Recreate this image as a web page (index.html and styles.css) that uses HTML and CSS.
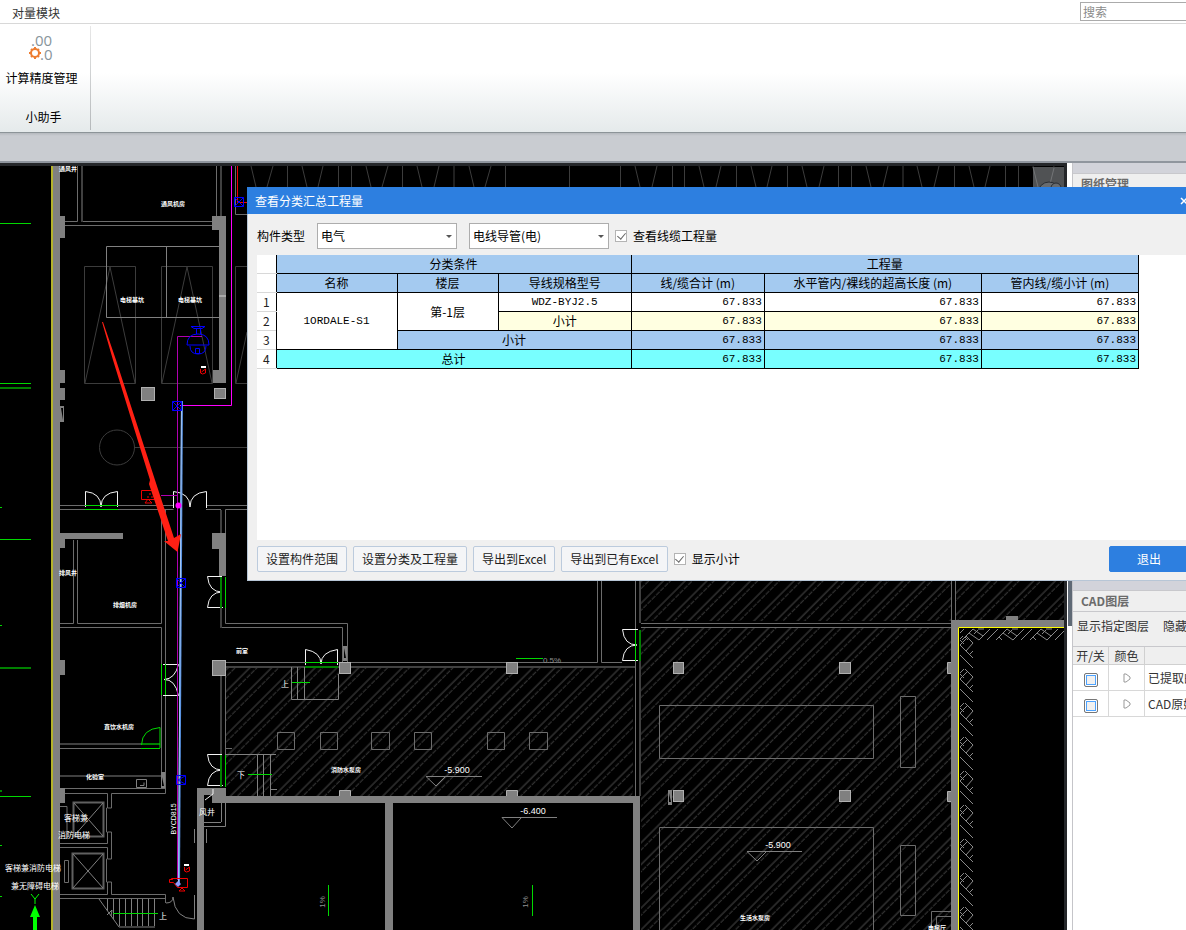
FILE: index.html
```
<!DOCTYPE html>
<html lang="zh-CN">
<head>
<meta charset="utf-8">
<title>查看分类汇总工程量</title>
<link rel="stylesheet" href="styles.css">
</head>
<body>
<div class="app">
  <header class="menu-bar">
    <a class="menu-tab" href="#">对量模块</a>
    <input class="search" type="text" placeholder="搜索" aria-label="搜索">
  </header>
  <div class="ribbon">
    <section class="ribbon-group">
      <button class="ribbon-button" type="button">
        <svg class="precision-icon" width="28" height="30" viewBox="0 0 28 30" aria-hidden="true">
          <text class="icon-digits" x="4" y="13">.00</text>
          <text class="icon-digits" x="13" y="27">.0</text>
          <g class="gear">
            <circle cx="8" cy="20" r="4"/>
            <path d="M8 14v2M8 24v2M2 20h2M12 20h2M4 16l1 1M11 23l1 1M4 24l1-1M11 17l1-1"/>
          </g>
        </svg>
        <span>计算精度管理</span>
      </button>
      <span class="ribbon-caption">小助手</span>
    </section>
  </div>
  <div class="tool-strip"></div>

  <main class="workspace">
    <div class="canvas">
      <svg class="drawing" width="100%" role="img" aria-label="CAD 图纸">
        <defs>
          <pattern id="hatch" width="15.4" height="120" patternUnits="userSpaceOnUse" patternTransform="rotate(45)">
            <path d="M2 0V120" stroke="#4a4a4a"/>
            <path d="M7 0V120" stroke="#3c3c3c" stroke-dasharray="5 1"/>
          </pattern>
          <pattern id="soil" x="960" y="655" width="14" height="34" patternUnits="userSpaceOnUse">
            <path class="soil-line" d="M0 0L13 13M5 14L13 22M0 24L13 37M0 -10L13 3M0 24L8 16M6 30L13 22M0 18L4 14M10 33L13 30M0 19L4 23"/>
          </pattern>
          <pattern id="soil-top" x="987" y="628" width="34" height="13" patternUnits="userSpaceOnUse">
            <path class="soil-line" d="M0 12L11 1M9 12L20 1M26 12L37 1M-8 12L3 1M12 9L15 12M16 5L26 12M20 1L30 8M25 1L31 1M21 6L25 2"/>
          </pattern>
        </defs>
        <g transform="translate(0,-163)">
          <!-- hatched rooms -->
          <g fill="url(#hatch)">
            <rect x="226" y="668" width="407" height="128"/>
            <rect x="641" y="575" width="310" height="46"/>
            <rect x="641" y="628" width="310" height="310"/>
            <rect x="956" y="575" width="108" height="45"/>
          </g>
          <rect x="960" y="636" width="14" height="300" fill="url(#soil)"/>
          <rect x="960" y="628" width="104" height="13" fill="url(#soil-top)"/>

          <!-- roof slopes along the top edge -->
          <path class="dark" d="M251 166l5 21M273 166l-6 21M302 166l5 21M323 166l-5 21M366 166l5 21M388 166l-6 21M417 166l5 21M439 166l-5 21M469 166l5 21M491 166l-6 21M635 166l5 21M657 166l-5 21M699 166l5 21M721 166l-5 21M751 166l5 21M772 166l-5 21M802 166l5 21M824 166l-5 21M866 166l5 21M888 166l-5 21M917 166l5 21M939 166l-5 21M969 166l5 21M990 166l-5 21M1033 166l5 21M1054 166l-5 21"/>
          <path class="dark" d="M287.500 166v21M338.500 166v21M351.500 166v21M402.500 166v21M505.500 166v21M569.500 166v21M620.500 166v21M672.500 166v21M684.500 166v21M736.500 166v21M787.500 166v21M838.500 166v21M851.500 166v21M954.500 166v21M1005.500 166v21M1018.500 166v21"/>
          <path class="shade" d="M454 166v21M903 166v21"/>

          <!-- axis marks and boundary -->
          <path class="green" d="M0 223.500H31M0 383.500H31M0 507.500H2M0 539.500H31M0 625.500H2M0 796.500H31M0 845.500H2M0 896.500H2"/>
          <path class="green-wide" d="M0 388H31M0 668H31M0 791H2"/>
          <rect x="51" y="166" width="2" height="770" fill="#b5b32c"/>

          <!-- elevator pits -->
          <path class="dark" d="M84.500 266.500h51v117h-51zM110 267L85 383M110 267L135 383M161.500 266.500h51v117h-51zM187 267L162 383M187 267L212 383M247 266.500H235.500V383.500H247M247 332L236 383"/>
          <path class="gray" d="M219 246.500H106.500V317.500H219M166.500 246.500V317.500"/>
          <circle class="dark" cx="117" cy="447.500" r="17.500"/>
          <path class="dark" d="M134 447.500H247"/>

          <!-- upper rooms -->
          <path class="line" d="M77.500 166V221.500H60M216.500 166V216M60 505.500H85M118 505.500H173M207 505.500H247M60 509.500H173.500M206 509.500H221M247 509.500H225.500V533M82 221.500H212M65 225.500H212M235.500 166V214.500H247"/>
          <path class="dim" d="M82 166V222M221 166V217M221 510V533"/>
          <path class="line" d="M73.500 540V623.500H60M77.500 540V623.500H161.500V510M60 627.500H161.500V773M165.500 510V793.500H111.500V808M60 748.500H141M60 788.500H165"/>
          <path class="dim" d="M60 744H141M60 776H161"/>
          <path class="line" d="M225.500 608V623.500H347.500V662M222 627.500H342.500V662M226 662.500H305M338 662.500H597.500V575M601.500 575V662.500H622M635.500 575V796M225.500 675V755M225 748.500H232"/>
          <path class="dim" d="M221 608V628M221 675V755M226 667H305M338 667H635M640 575V623M640 661V796"/>
          <path class="line" d="M641 623.500H951.500V575M641 627.500H951M955.500 575V620"/>

          <!-- walls -->
          <g class="wall">
            <rect x="53" y="166" width="7" height="770"/>
            <rect x="60" y="216" width="5" height="22"/>
            <rect x="60" y="370" width="5" height="13"/>
            <rect x="60" y="388" width="5" height="12"/>
            <path d="M60 406h4v16h-4z"/>
            <rect x="60" y="533" width="63" height="6"/>
            <rect x="60" y="539" width="5" height="9"/>
            <rect x="60" y="660" width="5" height="15"/>
            <rect x="60" y="788" width="5" height="15"/>
            <rect x="212" y="216" width="14" height="14"/>
            <rect x="219" y="217" width="7" height="166"/>
            <rect x="213" y="370" width="13" height="13"/>
            <rect x="219" y="533" width="7" height="43"/>
            <rect x="212" y="533" width="14" height="16"/>
            <rect x="343" y="646" width="4" height="15"/>
            <rect x="161" y="772" width="4" height="16"/>
            <rect x="212" y="788" width="14" height="15"/>
            <rect x="225" y="796" width="415" height="7"/>
            <rect x="385" y="803" width="8" height="133"/>
            <rect x="633" y="803" width="7" height="133"/>
            <rect x="197" y="788" width="7" height="148"/>
            <rect x="197" y="788" width="15" height="7"/>
            <rect x="951" y="620" width="113" height="7"/>
            <rect x="951" y="620" width="7" height="316"/>
            <rect x="1006" y="616" width="12" height="4"/>
            <rect x="668" y="790" width="4" height="15"/>
          </g>
          <path d="M61 408l2 12v-12zM344 658v-10l2 10zM162 786v-9l2 9zM669 802v-9l2 9z" fill="#000"/>
          <path d="M219 296h7" stroke="#aaa" stroke-width="2"/>

          <!-- columns -->
          <g class="column">
            <rect x="141.500" y="387.500" width="13" height="13"/>
            <rect x="214.500" y="388.500" width="11" height="10"/>
            <rect x="212.500" y="660.500" width="13" height="15"/>
            <rect x="339.500" y="662.500" width="11" height="11"/>
            <rect x="506.500" y="662.500" width="11" height="11"/>
            <rect x="673.500" y="662.500" width="10" height="11"/>
            <rect x="839.500" y="662.500" width="11" height="11"/>
            <path d="M951 662.500h-3.500v11h3.500M951 791.500h-3.500v10h3.500M339.500 796v-5.500h11v5.500M506.500 796v-5.500h11v5.500"/>
            <rect x="673.500" y="790.500" width="10" height="11"/>
            <rect x="839.500" y="790.500" width="11" height="11"/>
          </g>
          <path class="yellow" d="M958.500 936V627.500H1064"/>

          <!-- stairs and equipment bases -->
          <path class="gray" d="M291.500 667V699.500H338.500V674M297.500 667V699M304.500 667V699M225 754.500H276M257.500 754V796M263.500 754V796M270.500 754V796M271 789.500H277"/>
          <path class="line" d="M277.500 732.500h17v17h-17zM320.500 732.500h17v17h-17zM371.500 732.500h18v17h-18zM414.500 732.500h17v17h-17zM487.500 732.500h17v17h-17zM529.500 732.500h18v17h-18z"/>
          <path class="line" d="M659.500 705.500h214v53h-214zM900.500 696.500h15v71h-15zM659.500 936V827.500h214V936M900.500 845.500h15v70h-15zM951 911.500H931.500V936M951 916.500H936.500V936"/>
          <path class="gray" d="M482 776.500H426L436 786L445 777M557 817.500H502L512 828L521 818M802 851.500H747L757 861L766 852"/>

          <!-- elevators -->
          <path class="line" d="M65 793.500H107.500V808L106.500 808V832H107.500V843.500H60M60 847.500H107.500V859H106.500V882H107.500V894.500H60M111.500 808H108M111.500 832H108M111.500 832V859H108M111.500 882H108M111.500 882V894.500H165.500V903M60 898.500H165M64.500 860.500h4v22h-4zM60 806.500h7v32h-7"/>
          <path d="M73.500 802.500h30v34h-30zM72.500 853.500h31v35h-31z" stroke="#606060" stroke-width="2" fill="none"/>
          <path class="gray" d="M74 803L103 836M103 803L74 836M73 854L103 888M103 854L73 888"/>
          <path class="gray" d="M136.500 787.500v-8h10v8zM140 785.500h4v-3"/>
          <path class="gray" d="M204 822.500H221M204 826.500H225.500V803M221.500 803V822M194.500 829V843M206.500 829V843"/>
          <path class="gray" d="M99 899L119 927H155M107.500 899V911M113.500 899V919M119.500 899V926M125.500 899V926M131.500 899V926M137.500 899V926M142.500 899V926M148.500 899V926M154.500 899V926M107 915l5-5l-1 6"/>
          <path class="gray" d="M166 903Q173 903 173 897Q175 919 194.500 919V895"/>

          <!-- doors -->
          <path class="door" d="M85.500 507V491.500Q101 493 101 507Q101 493 117.500 491.500V507M173.500 508V491.500Q190 493 190 507Q190 493 206.500 491.500V508M305.500 665V649.500Q321 652 321 664Q321 652 337.500 649.500V665"/>
          <path class="door" d="M222 576.500H207.500Q209 592 222 592Q209 592 207.500 607.500H223M222 754.500H207.500Q209 770 222 770Q209 770 207.500 785.500H223M638 629.500H622.500Q624 645 637 645Q624 645 622.500 660.500H638M163 664.500H178.500Q175 679 164 679.500Q175 679 178.500 695.500H163M205 800l8-6v-5"/>
          <path class="green" d="M85 505.500H118M85 509.500H118M161.500 664V695M165.500 664V695M305 662.500H338M225.500 577V608M225.500 755V787M635.500 630V661M292 682.500H310M248 774.500H272M516 658.500H543M328.500 885V916M532.500 885V916M113 913.500H158M141 748.500H160"/>
          <path class="green-wide" d="M305 667H338M221 577V608M221 755V787M640 630V661M141 744H160"/>
          <path class="green" d="M141.500 745Q142 729 160 727.500V748"/>

          <!-- circuit wiring -->
          <path class="magenta" d="M231.500 166V405.500H180"/>
          <path class="purple" d="M202 336.500H177.500V880M161 495.500H178"/>
          <path class="red" d="M237.500 166V202.500H247"/>
          <path d="M182 401L179 884" stroke="#5791e0" stroke-width="2"/>
          <path d="M181.500 401L178.500 884" stroke="#a5c6f5" stroke-width="1"/>
          <circle cx="178.500" cy="505.500" r="3" fill="#f0f"/>
          <path class="blue" d="M234.500 197.500h9v9h-9zl9 9M243.500 197.500l-9 9M172.500 401.500h9v9h-9zl9 9M181.500 401.500l-9 9M176.500 578.500h9v9h-9zl9 9M185.500 578.500l-9 9M176.500 775.500h9v9h-9zM185 776l-7 4l7 4"/>
          <path class="blue" d="M191 326.500h14l-3 2h-8zM196.500 329v5M200.500 329v5M187 345Q187 334 198 334Q209 334 209 345zM190 346Q190 354 198 354Q206 354 206 346M195.500 348.500h4v5h-4z"/>
          <path class="red" d="M141.500 490.500h13v9h-13zM145 503l3-4l4 4zM147 497h2M151 497h2M149 494h2M171.500 878.500h16v9h-10l-4-5h-4v-3h3zM179 891l3-3l3 3z"/>
          <path class="red" d="M200.500 369v4l2 1l3-1v-4l-4 3M184.500 867v4l2 1l3-1v-4l-4 3"/>
          <path d="M201 367h5M184 865h5" stroke="#fff" stroke-width="2"/>
          <path d="M178 881l3 3l-3 3l-3-3z" fill="#8e9cff"/>
          <path d="M102 322L103 322L116 360L155 480L174 538L181 534L177.500 552L164 541L168 541L149 484L150 480L113 360Z" fill="#ff2014"/>
          <path d="M31 894l4 5l4-5M35 899v5" fill="none" stroke="#0f0"/>
          <path d="M35 905l5 12h-3v19h-4v-19h-3z" fill="#0f0"/>

          <!-- labels -->
          <g class="tiny">
            <text x="173" y="206">通风机房</text>
            <text x="132" y="302">电梯基坑</text>
            <text x="190" y="302">电梯基坑</text>
            <text x="68" y="171">通风井</text>
            <text x="68" y="575">排风井</text>
            <text x="125" y="607">排烟机房</text>
            <text x="119" y="729">直饮水机房</text>
            <text x="95" y="779">化验室</text>
            <text x="242" y="653">前室</text>
            <text x="346" y="772">消防水泵房</text>
            <text x="755" y="920">生活水泵房</text>
            <text x="937" y="930">电梯厅</text>
          </g>
          <g class="label">
            <text x="76" y="821">客梯兼</text>
            <text x="74" y="838">消防电梯</text>
            <text x="33" y="871">客梯兼消防电梯</text>
            <text x="35" y="889">兼无障碍电梯</text>
            <text x="207" y="815">风井</text>
            <text x="163" y="919">上</text>
            <text x="285" y="687">上</text>
            <text x="241" y="778">下</text>
          </g>
          <g class="level">
            <text x="457" y="773">-5.900</text>
            <text x="533" y="814">-6.400</text>
            <text x="778" y="848">-5.900</text>
          </g>
          <text class="cable" x="176" y="819" transform="rotate(-90 176 819)">BYCD815</text>
          <g class="slope">
            <text x="552" y="663">0.5%</text>
            <text x="325" y="902" transform="rotate(-90 325 902)">1%</text>
            <text x="528" y="902" transform="rotate(-90 528 902)">1%</text>
          </g>

          <!-- view cube -->
          <rect x="1033" y="167" width="32" height="30" rx="1" fill="#505254"/>
          <path d="M1033 167l5 20M1054 168l-5 20" stroke="#737577"/>
          <circle cx="1049" cy="193" r="11" fill="#686c70" stroke="#292c31"/>
          <circle cx="1056" cy="188" r="5" fill="#686c70" stroke="#292c31"/>
        </g>
      </svg>
    </div>
    <div class="gutter"><div class="thumb"></div></div>
    <aside class="side">
      <section class="panel">
        <div class="panel-grip"></div>
        <h2 class="panel-title">图纸管理</h2>
      </section>
      <section class="panel">
        <div class="panel-grip"></div>
        <h2 class="panel-title">CAD图层</h2>
        <div class="panel-tools">
          <button type="button">显示指定图层</button>
          <button type="button">隐藏指定图层</button>
        </div>
        <div class="layers-wrap">
          <table class="layers">
            <colgroup><col class="c-toggle"><col class="c-color"><col class="c-name"></colgroup>
            <thead><tr><th>开/关</th><th>颜色</th><th></th></tr></thead>
            <tbody>
              <tr>
                <td><input type="checkbox" aria-label="已提取的 CAD 图层"></td>
                <td><svg width="8" height="10" viewBox="0 0 8 10"><path class="expander" d="M1 1h2l4 3v2l-4 3H1z"/></svg></td>
                <td class="layer-name">已提取的CAD图层</td>
              </tr>
              <tr>
                <td><input type="checkbox" aria-label="CAD 原始图层"></td>
                <td><svg width="8" height="10" viewBox="0 0 8 10"><path class="expander" d="M1 1h2l4 3v2l-4 3H1z"/></svg></td>
                <td class="layer-name">CAD原始图层</td>
              </tr>
            </tbody>
          </table>
        </div>
      </section>
    </aside>
  </main>

  <div class="dialog" role="dialog" aria-labelledby="dialog-title">
    <div class="dialog-title">
      <span id="dialog-title">查看分类汇总工程量</span>
      <button class="close" type="button" aria-label="关闭">
        <svg width="8" height="8" viewBox="0 0 8 8"><path d="M1 1l6 6M7 1L1 7" stroke="#fff" stroke-width="1.500"/></svg>
      </button>
    </div>
    <div class="filters">
      <label for="kind">构件类型</label>
      <span class="combo"><select id="kind"><option>电气</option></select></span>
      <span class="combo"><select aria-label="构件"><option>电线导管(电)</option></select></span>
      <label class="check"><input type="checkbox" checked>查看线缆工程量</label>
    </div>
    <div class="sheet">
      <table class="totals">
        <colgroup><col class="w-index"><col class="w-name"><col class="w-floor"><col class="w-spec"><col class="w-total"><col class="w-level"><col class="w-pipe"></colgroup>
        <thead>
          <tr><th class="idx"></th><th colspan="3">分类条件</th><th colspan="3">工程量</th></tr>
          <tr><th class="idx"></th><th>名称</th><th>楼层</th><th>导线规格型号</th><th>线/缆合计 (m)</th><th>水平管内/裸线的超高长度 (m)</th><th>管内线/缆小计 (m)</th></tr>
        </thead>
        <tbody>
          <tr><th class="idx">1</th><td class="code" rowspan="3">1ORDALE-S1</td><td rowspan="2">第-1层</td><td class="code">WDZ-BYJ2.5</td><td class="num">67.833</td><td class="num">67.833</td><td class="num">67.833</td></tr>
          <tr class="sub"><th class="idx">2</th><td>小计</td><td class="num">67.833</td><td class="num">67.833</td><td class="num">67.833</td></tr>
          <tr class="floor-sum"><th class="idx">3</th><td colspan="2">小计</td><td class="num">67.833</td><td class="num">67.833</td><td class="num">67.833</td></tr>
          <tr class="grand"><th class="idx">4</th><td colspan="3">总计</td><td class="num">67.833</td><td class="num">67.833</td><td class="num">67.833</td></tr>
        </tbody>
      </table>
    </div>
    <div class="actions">
      <button class="btn" type="button">设置构件范围</button>
      <button class="btn" type="button">设置分类及工程量</button>
      <button class="btn" type="button">导出到Excel</button>
      <button class="btn" type="button">导出到已有Excel</button>
      <label class="check"><input type="checkbox" checked>显示小计</label>
      <button class="btn primary" type="button">退出</button>
    </div>
  </div>
</div>
</body>
</html>
```
FILE: styles.css
```
* { box-sizing: border-box; }

body {
  margin: 0;
  font: 12px/18px "Noto Sans CJK SC", sans-serif;
  color: #000;
}

button, input, select { font: inherit; color: inherit; }

button {
  padding: 0;
  border: 0;
  background: none;
  white-space: nowrap;
}

.app {
  position: relative;
  display: flex;
  flex-direction: column;
  height: 100vh;
  overflow: hidden;
}

/* menu and ribbon */
.menu-bar {
  display: flex;
  justify-content: space-between;
  align-items: center;
  flex: none;
  height: 24px;
  padding-left: 12px;
  border-bottom: 1px solid #d8d8d8;
  overflow: hidden;
}

.menu-tab { color: #333; text-decoration: none; padding-top: 3px; }

.search {
  width: 120px;
  height: 19px;
  margin-right: -14px;
  padding: 0 2px;
  border: 1px solid #ababab;
}

.search::placeholder { color: #8a8a8a; }

.ribbon {
  display: flex;
  flex: none;
  height: 109px;
  padding: 2px 0;
  border-bottom: 1px solid #8c9498;
  background: linear-gradient(#fff 45%, #e5eaeb);
}

.ribbon-group {
  display: flex;
  flex-direction: column;
  justify-content: space-between;
  align-items: center;
  width: 91px;
  padding: 7px 7px 4px 0;
  border-right: 1px solid;
  border-image: linear-gradient(#e8e8e8, #b4b8ba) 1;
}

.ribbon-button {
  display: flex;
  flex-direction: column;
  align-items: center;
  gap: 6px;
}

.precision-icon { overflow: visible; }
.icon-digits { font: 15px "Open Sans", sans-serif; fill: #87959b; }
.gear { fill: none; stroke: #ee7d31; stroke-width: 2; }
.ribbon-caption { padding-left: 4px; }

.tool-strip {
  flex: none;
  height: 30px;
  border-bottom: 2px solid #90969e;
  background: linear-gradient(#b5b9be, #c9ccd1 3px);
}

/* workspace */
.workspace { display: flex; flex: 1; min-height: 0; }

.canvas {
  flex: 1;
  min-width: 0;
  border: solid #25272a;
  border-width: 3px 3px 0 0;
  background: #000;
  overflow: hidden;
}

.drawing { display: block; height: calc(100% + 3px); margin-top: -3px; }

.gutter { flex: none; width: 5px; padding: 417px 0 0 1px; background: #fff; }
.thumb { width: 4px; height: 46px; background: #5f6975; }

/* drawing strokes */
.dark, .dim, .shade, .gray, .line, .green, .green-wide, .door, .magenta, .purple, .red, .blue, .yellow, .soil-line { fill: none; }
.dark { stroke: #3c3c3c; }
.dim { stroke: #404040; stroke-width: 2; }
.shade { stroke: #202020; stroke-width: 2; }
.gray { stroke: #808080; }
.line { stroke: #6c6c6c; }
.green { stroke: #00d800; }
.green-wide { stroke: #008000; stroke-width: 2; }
.door { stroke: #f4f4f4; }
.magenta { stroke: #ff00ff; }
.purple { stroke: #b000b0; }
.red { stroke: #f00000; }
.blue { stroke: #0000ff; }
.yellow { stroke: #ffff00; }
.soil-line { stroke: #8a8a8a; }
.wall { fill: #808080; }
.column { fill: #808080; stroke: #b0b0b0; }

.tiny, .label, .level, .slope, .cable { text-anchor: middle; fill: #fff; }
.tiny { font-size: 6px; font-weight: 700; }
.label { font-size: 8px; }
.level { font: 9px "Liberation Sans", sans-serif; }
.cable { font: 7px "Liberation Sans", sans-serif; }
.slope { font: 8px "Liberation Sans", sans-serif; fill: #909090; }

/* side panels */
.side {
  display: grid;
  grid-template-rows: 417px 1fr;
  flex: none;
  width: 114px;
  border-left: 1px solid #c5c5c9;
  color: #333;
}

.panel { background: #fff; overflow: hidden; }
.panel-grip { height: 10px; background: #d2d3da; }

.panel-title {
  height: 22px;
  margin: 0;
  padding-left: 8px;
  border: solid #c8c8cc;
  border-width: 1px 0;
  background: #efefef;
  color: #6b6b6b;
  font-size: 12px;
  line-height: 19px;
}

.panel-tools {
  display: flex;
  gap: 14px;
  height: 34px;
  padding: 5px 4px 0;
  background: #efefef;
}

.panel-tools button { height: 18px; }

.layers-wrap { border-top: 1px solid #c8c8cc; }
.layers { width: 200px; table-layout: fixed; border-collapse: separate; border-spacing: 0; }
.c-toggle, .c-color { width: 36px; }

.layers th {
  height: 18px;
  padding: 0;
  border: solid #d0d0d0;
  border-width: 0 1px 1px 0;
  background: #efefef;
  font-weight: 400;
  line-height: 16px;
}

.layers td {
  height: 26px;
  padding: 0;
  border: solid #d8d8d8;
  border-width: 0 1px 1px 0;
  text-align: center;
  line-height: 16px;
}

.layers .layer-name { padding-left: 3px; text-align: left; white-space: nowrap; }
.expander { fill: none; stroke: #999; }

.layers input {
  appearance: none;
  width: 14px;
  height: 14px;
  margin: 4px 0 0;
  border: 1px solid #777;
  border-radius: 2px;
  background: #f1f1f1;
  box-shadow: inset 0 0 0 1px #fff, inset 0 0 0 2px #4da3ff;
  vertical-align: middle;
}

/* dialog */
.dialog {
  position: absolute;
  top: 187px;
  left: 247px;
  right: -14px;
  border: solid #b7c6d6;
  border-width: 0 0 1px 1px;
  background: #f0f0f0;
}

.dialog-title {
  display: flex;
  justify-content: space-between;
  align-items: center;
  height: 27px;
  margin-left: -1px;
  padding: 0 12px 0 8px;
  background: #2d7fe0;
  color: #fff;
}

.close { display: flex; }

.filters {
  display: flex;
  align-items: center;
  gap: 12px;
  height: 41px;
  padding: 3px 9px 0;
}

.combo { position: relative; width: 140px; }

.combo::after {
  content: "";
  position: absolute;
  top: 12px;
  right: 5px;
  border: 3px solid transparent;
  border-top-color: #555;
  border-bottom: 0;
  pointer-events: none;
}

.combo select {
  appearance: none;
  display: block;
  width: 100%;
  height: 26px;
  padding: 0 3px;
  border: 1px solid #adadad;
  border-radius: 0;
  background: #fff;
}

.check { display: flex; align-items: center; gap: 6px; margin-left: -6px; }

.check input {
  appearance: none;
  display: flex;
  justify-content: center;
  width: 12px;
  height: 12px;
  margin: 0;
  border: 1px solid #b4b4b4;
  background: #fff;
}

.check input:checked::after {
  content: "";
  width: 4px;
  height: 7px;
  border: solid #666;
  border-width: 0 1px 1px 0;
  transform: rotate(40deg);
}

.sheet { height: 285px; margin-left: 9px; background: #fff; }

.totals { width: 882px; table-layout: fixed; border-collapse: collapse; }
.w-index { width: 19px; }
.w-name { width: 121px; }
.w-floor { width: 101px; }
.w-spec { width: 133px; }
.w-total { width: 133px; }
.w-level { width: 217px; }
.w-pipe { width: 157px; }

.totals th, .totals td {
  height: 19px;
  padding: 0;
  border: 1px solid #000;
  font-weight: 400;
  line-height: 18px;
  text-align: center;
  white-space: nowrap;
}

.totals thead th { background: #a4caf0; }
.totals thead tr:first-child th { height: 18px; border-top: 0; }
.totals .idx { border: solid #d8d8d8; border-width: 0 0 1px; background: #fff; color: #222; }
.totals .num { padding-right: 2px; text-align: right; }
.totals .num, .totals .code { font-family: "Liberation Mono", monospace; font-size: 11px; }
.totals .sub td { background: #ffffe1; }
.totals .floor-sum td { background: #a4caf0; }
.totals .grand td { background: #78ffff; }

.actions {
  display: flex;
  align-items: center;
  gap: 6px;
  height: 40px;
  padding: 0 11px 3px 9px;
}

.btn {
  height: 26px;
  padding: 0 8px;
  border: 1px solid #bccbdd;
  border-radius: 2px;
  background: #f4f5f7;
  color: #222;
}

.actions .check { margin-left: 0; }

.primary {
  width: 80px;
  margin-left: auto;
  border-color: #2d7fe0;
  background: #2d7fe0;
  color: #fff;
}
```
